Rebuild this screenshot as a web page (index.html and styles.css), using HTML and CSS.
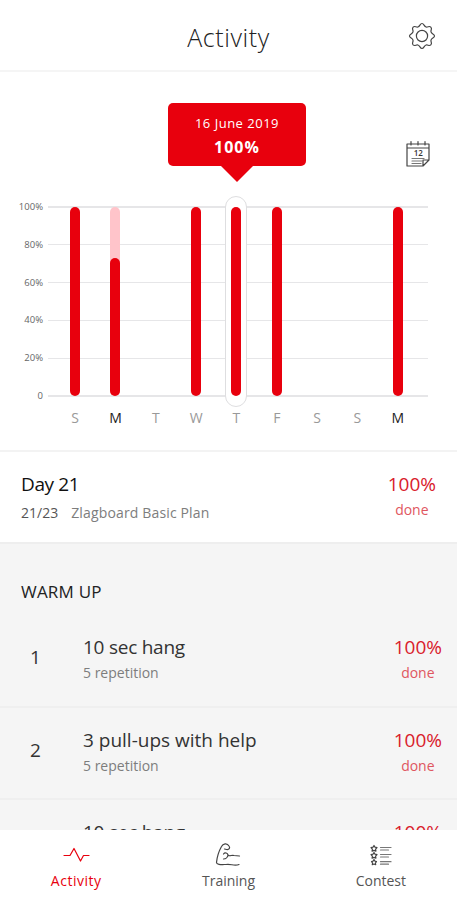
FILE: index.html
```html
<!DOCTYPE html>
<html lang="en">
<head>
  <meta charset="UTF-8"/>
  <meta name="viewport" content="width=device-width, initial-scale=1.0"/>
  <title>Activity</title>
  <link rel="stylesheet" href="styles.css">
</head>
<body>
  <div class="app">
    <header class="topbar">
      <h1>Activity</h1>
      <svg class="settings" viewBox="0 0 28 28" width="28" height="28">
        <path d="M14 1.5C16 1.5 16 4.5 18.1 5C20.100 5.500 21.100 3.400 22.800 5.100C24.600 6.900 22.500 7.900 23 9.900C23.500 12 26.500 12 26.500 14C26.500 16 23.500 16 23 18.100C22.500 20.100 24.600 21.100 22.800 22.900C21.100 24.600 20.100 22.500 18.100 23C16 23.500 16 26.500 14 26.500C12 26.500 12 23.500 9.900 23C7.900 22.500 6.900 24.600 5.100 22.900C3.400 21.100 5.500 20.100 5 18.100C4.500 16 1.500 16 1.500 14C1.500 12 4.500 12 5 9.900C5.500 7.900 3.400 6.900 5.100 5.100C6.900 3.400 7.900 5.500 9.900 5C12 4.500 12 1.500 14 1.500Z"/>
        <circle cx="14" cy="14" r="5.600"/>
      </svg>
    </header>

    <section class="chart">
      <svg class="calendar" viewBox="0 0 24 28" width="24" height="28">
        <path d="M1 4H23V20L17 26H1ZM1 8H23M23 20H17V26M5 1.500V5M12 1.500V5M19 1.500V5"/>
        <path class="lines" d="M6 18.500H18M6 21H16M6 23.500H15"/>
        <text x="12.300" y="16">12</text>
      </svg>

      <div class="plot">
        <div class="scale">
          <span>100%</span><span>80%</span><span>60%</span><span>40%</span><span>20%</span><span>0</span>
        </div>
        <div class="bars">
          <div class="col"><i class="bar"></i></div>
          <div class="col"><i class="bar partial"><b style="height:73%"></b></i></div>
          <div class="col"></div>
          <div class="col"><i class="bar"></i></div>
          <div class="col">
            <div class="selected"><i class="bar"></i></div>
            <div class="tooltip"><span>16 June 2019</span><strong>100%</strong></div>
          </div>
          <div class="col"><i class="bar"></i></div>
          <div class="col"></div>
          <div class="col"></div>
          <div class="col"><i class="bar"></i></div>
        </div>
      </div>
      <div class="days">
        <span>S</span><span class="on">M</span><span>T</span><span>W</span><span>T</span><span>F</span><span>S</span><span>S</span><span class="on">M</span>
      </div>
    </section>

    <section class="plan">
      <div class="plan-info">
        <h2>Day 21</h2>
        <p><span class="count">21/23</span><span class="plan-name">Zlagboard Basic Plan</span></p>
      </div>
      <div class="result"><strong>100%</strong><span>done</span></div>
    </section>

    <section class="exercises">
      <h3>WARM UP</h3>
      <div class="row">
        <span class="num">1</span>
        <div class="info"><h4 class="hang">10 sec hang</h4><p>5 repetition</p></div>
        <div class="result"><strong>100%</strong><span>done</span></div>
      </div>
      <div class="row">
        <span class="num">2</span>
        <div class="info"><h4>3 pull-ups with help</h4><p>5 repetition</p></div>
        <div class="result"><strong>100%</strong><span>done</span></div>
      </div>
      <div class="row">
        <span class="num"></span>
        <div class="info"><h4 class="hang">10 sec hang</h4></div>
        <div class="result"><strong>100%</strong></div>
      </div>
    </section>

    <nav class="tabs">
      <a class="tab active">
        <svg viewBox="0 0 28 26" width="28" height="26"><path d="M2 13.500H8L12 6.500L18.500 19L21.500 13.500H27"/></svg>
        <span>Activity</span>
      </a>
      <a class="tab">
        <svg viewBox="0 0 28 26" width="28" height="26"><path d="M12.500 7.500C15 8 16.500 6 15 4C13 .500 9 1.500 7.500 4.500C5 9 3 15 2.500 20.500C2.500 23 8 22.500 12 22.500C17 21.500 20 24.500 25 22.500M12.500 7.500L10.500 7M9.500 12C11 10 13.500 11 14 13C16 15 17.500 12.500 20 13.500L25.500 14M9.500 17C11.500 17 13.500 15.500 14 13"/></svg>
        <span>Training</span>
      </a>
      <a class="tab">
        <svg viewBox="0 0 28 26" width="28" height="26">
          <path d="M7 3.500L8 5.200L10 5.600L8.600 7.200L8.900 9.200L7 8.400L5.100 9.200L5.400 7.200L4 5.600L6 5.200ZM7 10.500L8 12.200L10 12.600L8.600 14.200L8.900 16.200L7 15.400L5.100 16.200L5.400 14.200L4 12.600L6 12.200ZM7 17.500L8 19.200L9.500 19.600L8.400 21L8.700 22.700L7 22L5.300 22.700L5.600 21L4.500 19.600L6 19.200Z"/>
          <path class="lines" d="M13.500 5.500H24M13.500 8H21.500M13.500 12.500H24M13.500 15H21.500M13.500 19.700H24M13.500 22.200H21.500"/>
        </svg>
        <span>Contest</span>
      </a>
    </nav>
  </div>
</body>
</html>
```
FILE: styles.css
```css
:root {
  --red:#e8000d; --pink:#ffc4ca; --grid:#e6e6e8;
  --bg:#f5f5f5; --text:#222; --muted:#7d7d7d;
}
*{box-sizing:border-box;margin:0;padding:0;}
body{font-family:'Open Sans','Noto Sans',sans-serif;background:#fff;color:var(--text);}
h1,h2,h3,h4{font-weight:400;}
svg{fill:none;stroke:#444;stroke-width:1.2;stroke-linejoin:round;stroke-linecap:round;}
.app{height:900px;display:flex;flex-direction:column;overflow:hidden;}

.topbar{position:relative;flex:none;height:72px;display:flex;justify-content:center;align-items:center;padding-top:3px;border-bottom:2px solid #f5f5f5;}
.topbar h1{font-size:25px;line-height:34px;font-weight:300;letter-spacing:.6px;}
.settings{position:absolute;right:21px;top:22px;}

.chart{position:relative;flex:none;height:378px;padding:134px 29px 0 0;}
.calendar{position:absolute;right:27px;top:68px;}
.calendar text{font-size:8px;font-weight:600;text-anchor:middle;fill:#333;stroke:none;}
.lines{stroke:#777;}
.plot{display:flex;height:191px;}
.scale{width:48px;flex:none;display:flex;flex-direction:column;justify-content:space-between;margin:-5px 0;padding-right:5px;text-align:right;font-size:9.5px;line-height:12px;color:#666;}
.bars{flex:1;display:flex;padding:0 10px 0 7px;background:repeating-linear-gradient(to bottom,var(--grid) 0 1.500px,transparent 1.500px 37.900px);}
.col{position:relative;flex:1;display:flex;justify-content:center;padding:1px 0;}
.bar{width:10px;border-radius:5px;background:var(--red);display:flex;align-items:flex-end;}
.bar.partial{background:var(--pink);}
.bar b{width:10px;border-radius:5px;background:var(--red);}
.selected{display:flex;margin:-11px 0;padding:10px 5px;background:#fff;border:1px solid #dedee0;border-radius:11px;}
.tooltip{position:absolute;left:50%;top:-103px;width:138px;height:63px;margin-left:-68.500px;border-radius:5px;background:var(--red);color:#fff;display:flex;flex-direction:column;align-items:center;padding-top:11px;}
.tooltip::after{content:'';position:absolute;top:62px;left:52px;border:17px solid transparent;border-top-color:var(--red);border-bottom:0;}
.tooltip span{font-size:13px;line-height:18px;letter-spacing:.5px;}
.tooltip strong{font-size:16px;line-height:22px;margin-top:4px;letter-spacing:1px;}
.days{display:flex;padding:9px 10px 0 55px;font-size:14px;line-height:24px;color:#999;}
.days span{flex:1;text-align:center;}
.days .on{color:#222;}

.plan{flex:none;height:94px;display:flex;justify-content:space-between;padding:19px 21px 0;border-top:2px solid #f3f3f3;border-bottom:2px solid #eee;}
.plan h2{font-size:19px;line-height:26px;font-weight:500;letter-spacing:-.4px;color:#111;}
.plan p{font-size:14px;line-height:20px;margin-top:6px;}
.count{color:#555;margin-right:13px;}
.plan-name{color:var(--muted);letter-spacing:.15px;}
.result{display:flex;flex-direction:column;align-items:center;color:#d9202b;}
.result strong{font-size:19px;line-height:26px;font-weight:500;}
.result span{font-size:14px;line-height:20px;color:#df5660;margin-top:3px;}

.exercises{flex:1;min-height:0;overflow:hidden;background:var(--bg);}
.exercises h3{font-size:17px;line-height:24px;padding:36px 21px 0;letter-spacing:.2px;}
.row{height:92.500px;display:flex;padding-right:15px;border-bottom:2px solid #efefef;}
h3 + .row{margin-top:11px;}
.num{width:71px;text-align:center;font-size:19px;line-height:26px;padding-top:29px;color:#333;}
.info{flex:1;padding:19px 0 0 12px;}
.info h4{font-size:19px;line-height:26px;color:#333;}
.info .hang{letter-spacing:-.25px;}
.info p{font-size:14px;line-height:20px;margin-top:3px;color:var(--muted);}
.row .result{padding-top:19px;}

.tabs{flex:none;height:70px;display:flex;background:#fff;}
.tab{flex:1;display:flex;flex-direction:column;align-items:center;padding-top:12px;font-size:14px;line-height:20px;color:#555;}
.tab span{margin-top:3px;}
.tab.active{color:var(--red);letter-spacing:.5px;}
.tab.active svg{stroke:var(--red);}
```
